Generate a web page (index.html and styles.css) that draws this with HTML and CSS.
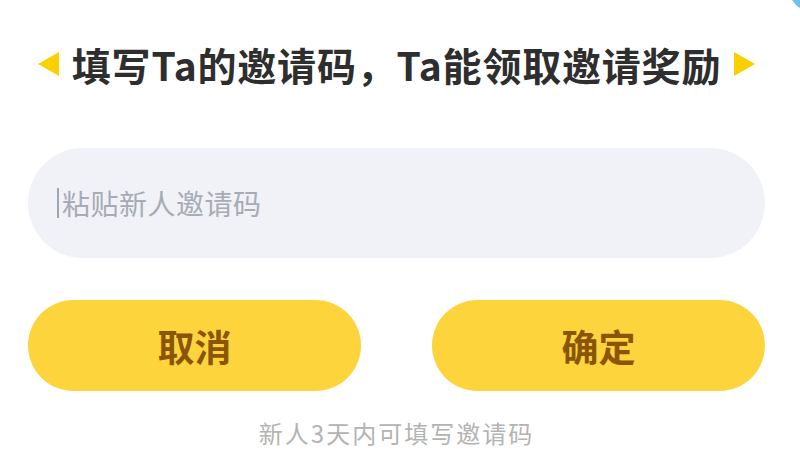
FILE: index.html
```html
<!DOCTYPE html>
<html lang="zh-CN">
<head>
    <meta charset="UTF-8">
    <meta name="viewport" content="width=device-width, initial-scale=1.0">
    <title>填写邀请码</title>
    <link rel="stylesheet" href="styles.css">
</head>
<body>
    <div class="dialog">
        <!-- 装饰圆 -->
        <div class="corner-dot"></div>

        <!-- 标题 -->
        <div class="title-row">
            <span class="arrow arrow-left"></span>
            <h1 class="title">填写Ta的邀请码，Ta能领取邀请奖励</h1>
            <span class="arrow arrow-right"></span>
        </div>

        <!-- 输入框 -->
        <div class="code-input">
            <span class="caret"></span>
            <span class="placeholder">粘贴新人邀请码</span>
        </div>

        <!-- 按钮 -->
        <div class="button-group">
            <button class="btn">取消</button>
            <button class="btn">确定</button>
        </div>

        <p class="tip">新人3天内可填写邀请码</p>
    </div>
</body>
</html>
```

FILE: styles.css
```css
html, body {
    margin: 0;
    padding: 0;
    width: 800px;
    height: 457px;
    background-color: #fff;
    overflow: hidden;
}

body {
    font-family: "Noto Sans CJK SC", "Noto Sans", sans-serif;
}

.dialog {
    position: relative;
    width: 800px;
    height: 457px;
    padding: 0 35px 0 28px;
    box-sizing: border-box;
    overflow: hidden;
}

.corner-dot {
    position: absolute;
    top: -40px;
    right: -40px;
    width: 52px;
    height: 52px;
    border-radius: 50%;
    background-color: #6cc3f3;
}

.title-row {
    display: flex;
    align-items: center;
    justify-content: center;
    gap: 13px;
    height: 140px;
    padding-bottom: 12px;
    box-sizing: border-box;
}

.title {
    margin: 0;
    font-size: 39px;
    font-weight: 700;
    color: #2e2e2e;
    letter-spacing: 0.8px;
    white-space: nowrap;
}

.arrow {
    width: 0;
    height: 0;
    border-top: 12px solid transparent;
    border-bottom: 12px solid transparent;
}

.arrow-left {
    border-right: 21px solid #fccf00;
}

.arrow-right {
    border-left: 21px solid #fccf00;
}

.code-input {
    display: flex;
    align-items: center;
    height: 110px;
    margin-top: 8px;
    padding-left: 29px;
    border-radius: 55px;
    background-color: #f1f2f7;
}

.caret {
    width: 2px;
    height: 30px;
    margin-right: 3px;
    background-color: #9ea5b3;
}

.placeholder {
    font-size: 28px;
    color: #a7abb5;
    letter-spacing: 0.5px;
}

.button-group {
    display: flex;
    justify-content: space-between;
    margin-top: 42px;
}

.btn {
    width: 333px;
    height: 91px;
    border: none;
    border-radius: 46px;
    background-color: #fed43d;
    color: #8a5506;
    font-family: "Noto Sans CJK SC", "Noto Sans", sans-serif;
    font-size: 37px;
    font-weight: 700;
    cursor: pointer;
}

.tip {
    margin: 24px 0 0;
    text-align: center;
    font-size: 24px;
    letter-spacing: 2px;
    color: #b3b3b3;
}
```
